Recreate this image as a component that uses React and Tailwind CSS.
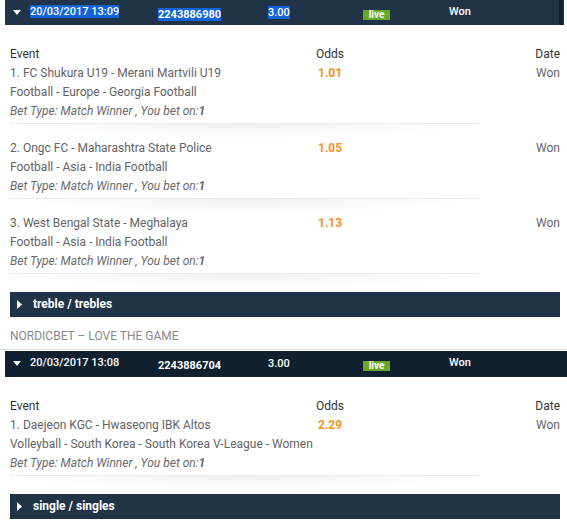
import React from 'react';

const bets = [
  {
    date: '20/03/2017 13:09',
    id: '2243886980',
    odds: '3.00',
    status: 'Won',
    selected: true,
    type: 'treble / trebles',
    legs: [
      { event: '1. FC Shukura U19 - Merani Martvili U19', league: 'Football - Europe - Georgia Football', odds: '1.01', result: 'Won' },
      { event: '2. Ongc FC - Maharashtra State Police', league: 'Football - Asia - India Football', odds: '1.05', result: 'Won' },
      { event: '3. West Bengal State - Meghalaya', league: 'Football - Asia - India Football', odds: '1.13', result: 'Won' },
    ],
  },
  {
    date: '20/03/2017 13:08',
    id: '2243886704',
    odds: '3.00',
    status: 'Won',
    selected: false,
    type: 'single / singles',
    legs: [
      { event: '1. Daejeon KGC - Hwaseong IBK Altos', league: 'Volleyball - South Korea - South Korea V-League - Women', odds: '2.29', result: 'Won' },
    ],
  },
];

const CaretDown = () => (
  <svg width="8" height="5" viewBox="0 0 8 5" className="block">
    <path d="M0 0 L8 0 L4 5 Z" fill="#fff" />
  </svg>
);

const CaretRight = () => (
  <svg width="5" height="9" viewBox="0 0 5 9" className="block">
    <path d="M0 0 L5 4.5 L0 9 Z" fill="#fff" />
  </svg>
);

const BetHeader = ({ bet, first }) => {
  const sel = bet.selected ? 'bg-[#1163d9]' : '';
  return (
    <div
      className={
        'flex items-start text-white text-[11px] leading-[14px] ml-[5px] ' +
        (first ? 'h-[25px] mr-[3px] bg-[#213347]' : 'h-[26px] bg-[#10202f]')
      }
    >
      <div className="w-[25px] pl-[8px] pt-[10px]">
        <CaretDown />
      </div>
      <div className="w-[128px] pt-[5px] font-medium">
        <span className={sel}>{bet.date}</span>
      </div>
      <div className="w-[110px] pt-[8px] font-bold">
        <span className={sel}>{bet.id}</span>
      </div>
      <div className="w-[95px] pt-[6px] font-medium">
        <span className={sel}>{bet.odds}</span>
      </div>
      <div className="w-[86px] pt-[10px]">
        <span className="flex items-center justify-center w-[27px] h-[10px] bg-[#67a82b] text-[10px] leading-[10px] font-bold text-white">
          live
        </span>
      </div>
      <div className="flex-1 pt-[5px] font-medium">{bet.status}</div>
      {first && <div className="w-[4px] h-full bg-[#10202f] mr-[1px]" />}
    </div>
  );
};

const Leg = ({ leg }) => (
  <div className="flex">
    <div className="w-[470px]">
      <div className="flex pb-[2px] border-b border-[#ececec]">
        <div className="w-[306px] text-[#646464]">
          <div>{leg.event}</div>
          <div>{leg.league}</div>
          <div className="italic text-[#6a6a6a]">
            Bet Type: Match Winner , You bet on:<span className="font-bold">1</span>
          </div>
        </div>
        <div className="font-bold text-[#f39323] pl-[2px]">{leg.odds}</div>
      </div>
      <div className="h-[15px] bg-[radial-gradient(ellipse_at_top,rgba(0,0,0,0.06),transparent_70%)]" />
    </div>
    <div className="flex-1 text-right text-[#646464]">{leg.result}</div>
  </div>
);

const Bet = ({ bet, first }) => (
  <div>
    <BetHeader bet={bet} first={first} />
    <div className="pl-[10px] pr-[7px] pt-[20px]">
      <div className="flex text-[#333]">
        <div className="w-[306px]">Event</div>
        <div className="flex-1">Odds</div>
        <div>Date</div>
      </div>
      {bet.legs.map((leg, i) => (
        <Leg key={i} leg={leg} />
      ))}
      <div className="mt-[3px] h-[25px] bg-[#213347] flex items-center gap-[11px] pl-[7px] text-white font-bold">
        <CaretRight />
        <span>{bet.type}</span>
      </div>
    </div>
  </div>
);

export default function App() {
  return (
    <div
      className="w-[567px] h-[523px] overflow-hidden bg-white text-[12px] leading-[19px]"
      style={{ fontFamily: 'Roboto, "Liberation Sans", sans-serif' }}
    >
      <Bet bet={bets[0]} first />
      <div className="mt-[10px] pl-[10px] text-[#888]">NORDICBET – LOVE THE GAME</div>
      <div className="mt-[3px] h-px bg-[#dde1e6]" />
      <div className="mt-[1px]">
        <Bet bet={bets[1]} />
      </div>
    </div>
  );
}
